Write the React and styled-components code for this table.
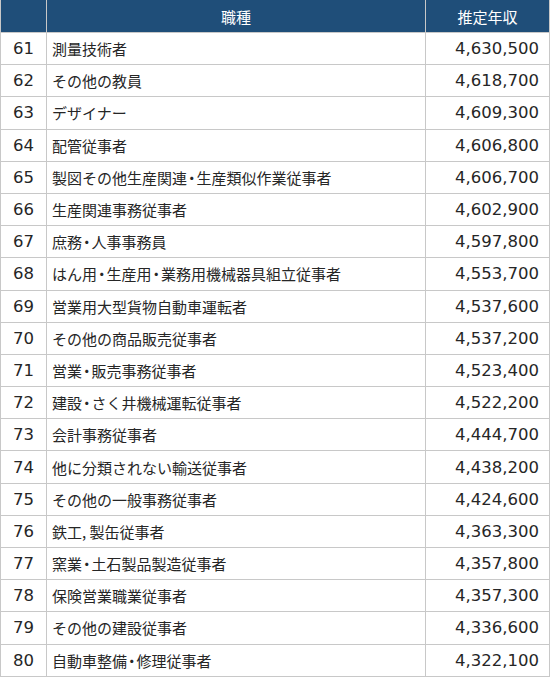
import React from "react";
import styled, { createGlobalStyle } from "styled-components";

const rows = [
  [61, "測量技術者", "4,630,500"],
  [62, "その他の教員", "4,618,700"],
  [63, "デザイナー", "4,609,300"],
  [64, "配管従事者", "4,606,800"],
  [65, "製図その他生産関連・生産類似作業従事者", "4,606,700"],
  [66, "生産関連事務従事者", "4,602,900"],
  [67, "庶務・人事事務員", "4,597,800"],
  [68, "はん用・生産用・業務用機械器具組立従事者", "4,553,700"],
  [69, "営業用大型貨物自動車運転者", "4,537,600"],
  [70, "その他の商品販売従事者", "4,537,200"],
  [71, "営業・販売事務従事者", "4,523,400"],
  [72, "建設・さく井機械運転従事者", "4,522,200"],
  [73, "会計事務従事者", "4,444,700"],
  [74, "他に分類されない輸送従事者", "4,438,200"],
  [75, "その他の一般事務従事者", "4,424,600"],
  [76, "鉄工, 製缶従事者", "4,363,300"],
  [77, "窯業・土石製品製造従事者", "4,357,800"],
  [78, "保険営業職業従事者", "4,357,300"],
  [79, "その他の建設従事者", "4,336,600"],
  [80, "自動車整備・修理従事者", "4,322,100"],
];

const GlobalStyle = createGlobalStyle`
  body {
    margin: 0;
    background: #fff;
    font-family: "Noto Sans CJK JP", sans-serif;
  }
`;

const Table = styled.table`
  width: 550px;
  border-collapse: collapse;
  table-layout: fixed;
  color: #262626;
`;

const HeadCell = styled.th`
  height: 32px;
  padding: 0;
  background: #1f4e79;
  color: #fff;
  font-weight: normal;
  font-size: 15px;
  text-align: center;
  border: 1px solid #c8c8c8;
  border-top: none;
`;

const Cell = styled.td`
  height: 31.2px;
  padding: ${p => (p.$align === "right" ? "0 10px 0 0" : p.$align === "left" ? "0 0 0 5px" : "0")};
  text-align: ${p => p.$align || "center"};
  font-family: ${p =>
    p.$num ? '"DejaVu Sans", "Noto Sans CJK JP", sans-serif' : '"Noto Sans CJK JP", sans-serif'};
  font-size: ${p => (p.$num ? "16.5px" : "15px")};
  border: 1px solid #c8c8c8;
  white-space: nowrap;
  vertical-align: middle;
`;

// the middle dot is set narrower than a full em, as Meiryo does
const Dot = styled.span`
  font-feature-settings: "halt";
  padding: 0 1px;
`;

function JobName({ text }) {
  const parts = text.split("・");
  return parts.map((part, i) => (
    <React.Fragment key={i}>
      {i > 0 && <Dot>・</Dot>}
      {part}
    </React.Fragment>
  ));
}

export default function App() {
  return (
    <>
      <GlobalStyle />
      <Table>
        <colgroup>
          <col style={{ width: "46px" }} />
          <col />
          <col style={{ width: "124px" }} />
        </colgroup>
        <thead>
          <tr>
            <HeadCell></HeadCell>
            <HeadCell>職種</HeadCell>
            <HeadCell>推定年収</HeadCell>
          </tr>
        </thead>
        <tbody>
          {rows.map(([rank, job, pay]) => (
            <tr key={rank}>
              <Cell $num>{rank}</Cell>
              <Cell $align="left">
                <JobName text={job} />
              </Cell>
              <Cell $num $align="right">
                {pay}
              </Cell>
            </tr>
          ))}
        </tbody>
      </Table>
    </>
  );
}
